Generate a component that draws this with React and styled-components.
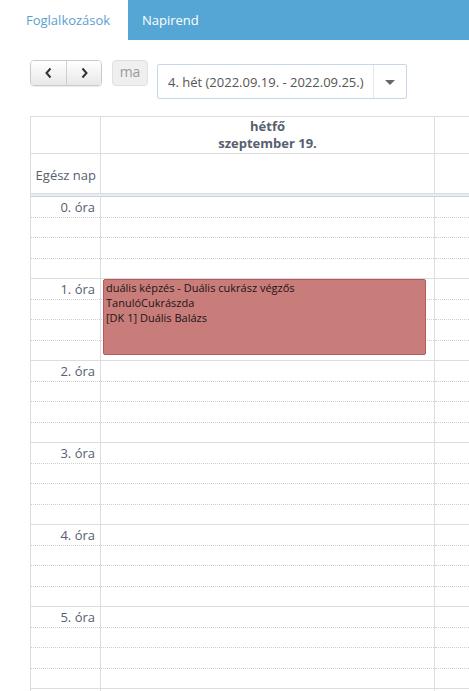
import React from "react";
import styled, { createGlobalStyle } from "styled-components";

const Global = createGlobalStyle`
  html, body { margin: 0; padding: 0; background: #fff; overflow: hidden; }
  body { font-family: "Open Sans", "Noto Sans", Arial, sans-serif; }
  * { box-sizing: border-box; }
`;

const Page = styled.div`
  width: 469px;
  height: 691px;
  overflow: hidden;
`;

const TabBar = styled.div`
  display: flex;
  height: 40px;
  background: #55a6d4;
`;

const Tab = styled.div`
  display: flex;
  align-items: center;
  padding: 0 ${(p) => (p.$active ? "15px" : "14px")} 0 ${(p) => (p.$active ? "26px" : "14px")};
  width: ${(p) => (p.$active ? "128px" : "auto")};
  background: ${(p) => (p.$active ? "#fff" : "transparent")};
  color: ${(p) => (p.$active ? "#5a9fcf" : "#fff")};
  font-size: 13px;
`;

const Toolbar = styled.div`
  display: flex;
  align-items: flex-start;
  padding: 20px 0 0 30px;
  height: 76px;
`;

const BtnGroup = styled.div`
  display: flex;
  height: 26px;
  border: 1px solid #c9c9c9;
  border-radius: 4px;
  overflow: hidden;
  box-shadow: 0 1px 1px rgba(0, 0, 0, 0.08);
`;

const NavBtn = styled.div`
  width: 35px;
  display: flex;
  align-items: center;
  justify-content: center;
  background: linear-gradient(#ffffff, #e8e8e8);
  border-left: ${(p) => (p.$divider ? "1px solid #cfcfcf" : "none")};
`;

const TodayBtn = styled.div`
  margin: 0 0 0 10px;
  width: 36px;
  height: 26px;
  border: 1px solid #e0e0e0;
  border-radius: 4px;
  background: #efefef;
  color: #9a9a9a;
  font-size: 14px;
  display: flex;
  align-items: center;
  justify-content: center;
  padding-bottom: 4px;
`;

const Select = styled.div`
  margin: 4px 0 0 9px;
  width: 250px;
  height: 35px;
  border: 1px solid #c8d7e6;
  border-radius: 2px;
  display: flex;
  align-items: stretch;
`;

const SelectText = styled.div`
  flex: 1;
  display: flex;
  align-items: center;
  padding-left: 10px;
  font-size: 13px;
  color: #555;
`;

const SelectArrow = styled.div`
  width: 33px;
  border-left: 1px solid #e3e8ee;
  display: flex;
  align-items: center;
  justify-content: center;
`;

const Caret = styled.div`
  width: 0;
  height: 0;
  border-left: 5px solid transparent;
  border-right: 5px solid transparent;
  border-top: 5px solid #666;
  margin-top: 1px;
`;

const Table = styled.div`
  margin-left: 30px;
  width: 700px;
  border-left: 1px solid #ddd;
  border-top: 1px solid #ddd;
`;

const Row = styled.div`
  display: grid;
  grid-template-columns: 70px 334px 1fr;
  height: ${(p) => p.$h}px;
  border-bottom: 1px solid #ddd;
`;

const Cell = styled.div`
  position: relative;
  border-right: 1px solid #ddd;
  display: flex;
  flex-direction: column;
  justify-content: ${(p) => p.$justify || "flex-start"};
  align-items: ${(p) => p.$align || "stretch"};
  color: #56606e;
  font-size: 13px;
`;

const HeadText = styled.div`
  font-weight: 700;
  font-size: 13px;
  line-height: 17px;
  text-align: center;
  color: #56606e;
`;

const AllDayLabel = styled.div`
  padding-right: 4px;
  padding-top: 2px;
`;

const Divider = styled.div`
  height: 4px;
  background: #eaeef2;
  border-bottom: 1px solid #c7d2dd;
  border-top: 1px solid #d5dde5;
  margin-top: -1px;
`;

const Slot = styled.div`
  flex: 1;
  border-bottom: ${(p) => (p.$last ? "none" : "1px dotted #cfcfcf")};
  display: flex;
  justify-content: flex-end;
  align-items: center;
  padding-right: 5px;
  font-size: 13px;
  color: #56606e;
  line-height: 20px;
`;

const Event = styled.div`
  position: absolute;
  left: 2px;
  right: 8px;
  top: 0;
  height: 76px;
  background: #c87d7b;
  border: 1px solid #b5575c;
  border-radius: 2px;
  padding: 0 2px;
  font-size: 11px;
  line-height: 15px;
  color: #221414;
`;

const Chevron = ({ dir }) => (
  <svg width="9" height="12" viewBox="0 0 9 12">
    <path
      d={dir === "left" ? "M6.5 1.5 L2.5 6 L6.5 10.5" : "M2.5 1.5 L6.5 6 L2.5 10.5"}
      fill="none"
      stroke="#333"
      strokeWidth="2"
    />
  </svg>
);

const Slots = ({ label }) => (
  <>
    {[0, 1, 2, 3].map((i) => (
      <Slot key={i} $last={i === 3}>
        {i === 0 ? label : null}
      </Slot>
    ))}
  </>
);

const hours = [0, 1, 2, 3, 4, 5];

export default function App() {
  return (
    <Page>
      <Global />
      <TabBar>
        <Tab $active>Foglalkozások</Tab>
        <Tab>Napirend</Tab>
      </TabBar>
      <Toolbar>
        <BtnGroup>
          <NavBtn>
            <Chevron dir="left" />
          </NavBtn>
          <NavBtn $divider>
            <Chevron dir="right" />
          </NavBtn>
        </BtnGroup>
        <TodayBtn>ma</TodayBtn>
        <Select>
          <SelectText>4. hét (2022.09.19. - 2022.09.25.)</SelectText>
          <SelectArrow>
            <Caret />
          </SelectArrow>
        </Select>
      </Toolbar>
      <Table>
        <Row $h={37}>
          <Cell />
          <Cell $justify="center">
            <HeadText>
              <div>hétfő</div>
              <div>szeptember 19.</div>
            </HeadText>
          </Cell>
          <Cell />
        </Row>
        <Row $h={40}>
          <Cell $justify="center" $align="flex-end">
            <AllDayLabel>Egész nap</AllDayLabel>
          </Cell>
          <Cell />
          <Cell />
        </Row>
        <Divider />
        {hours.map((h) => (
          <Row key={h} $h={82}>
            <Cell>
              <Slots label={`${h}. óra`} />
            </Cell>
            <Cell>
              <Slots />
              {h === 1 && (
                <Event>
                  <div>duális képzés - Duális cukrász végzős</div>
                  <div>TanulóCukrászda</div>
                  <div>[DK 1] Duális Balázs</div>
                </Event>
              )}
            </Cell>
            <Cell>
              <Slots />
            </Cell>
          </Row>
        ))}
        <Row $h={10}>
          <Cell />
          <Cell />
          <Cell />
        </Row>
      </Table>
    </Page>
  );
}
